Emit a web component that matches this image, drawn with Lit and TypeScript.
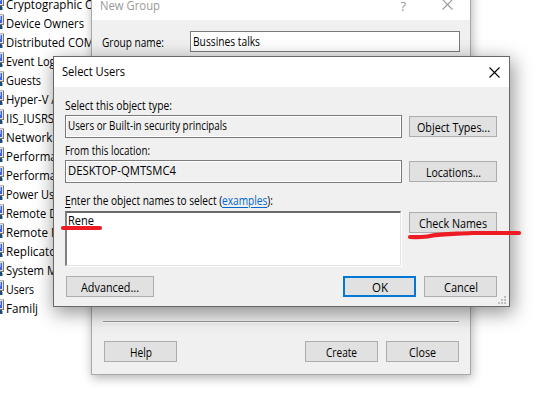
import { LitElement, html, css, svg } from "lit";
import { customElement, property } from "lit/decorators.js";

/* A run of text condensed or widened so that it fills a given width. */
@customElement("fit-text")
class FitText extends LitElement {
  @property({ type: Number }) w = 0;
  static styles = css`
    :host { display: inline-block; white-space: pre; flex: none; }
    span { display: inline-block; transform-origin: 0 0; }
  `;
  render() { return html`<span><slot></slot></span>`; }
  firstUpdated() {
    const s = this.renderRoot.querySelector("span") as HTMLElement;
    const natural = s.getBoundingClientRect().width;
    if (!this.w || !natural) return;
    this.style.width = this.w + "px";
    s.style.transform = `scaleX(${(this.w / natural).toFixed(4)})`;
  }
}

const groups: [string, number][] = [
  ["Cryptographic O", 88], ["Device Owners", 78], ["Distributed COM", 88],
  ["Event Log Readers", 94], ["Guests", 35], ["Hyper-V Administrators", 124], ["IIS_IUSRS", 48],
  ["Network Config", 84], ["Performance Log", 92], ["Performance Mon", 96],
  ["Power Users", 64], ["Remote Desktop", 86], ["Remote Manage", 88],
  ["Replicator", 55], ["System Managed", 90], ["Users", 28], ["Familj", 32],
];

const userIcon = svg`
  <path d="M0 0h4v11H0z" fill="#b9b8b4"/>
  <path d="M0 1h3v9H0z" fill="#e4e2dc"/>
  <path d="M0 2h2v7H0z" fill="#3c62dc"/>
  <path d="M0 2h1v4H0z" fill="#8caef5"/>
  <path d="M3 1h1v10H0v-1h3z" fill="#77776f"/>
  <path d="M0 11h2v4H0z" fill="#1f4a72"/><path d="M2 12h1v3H2z" fill="#8fb0c8"/>`;

@customElement("app-root")
class AppRoot extends LitElement {
  static styles = css`
    :host { display: block; position: relative; width: 553px; height: 418px; overflow: hidden;
      background: #fff; color: #000; font: 12px/16px "Open Sans", "Noto Sans", sans-serif; }
    * { box-sizing: border-box; }
    .list { display: flex; flex-direction: column; margin-top: -5px; width: 150px; }
    .row { display: flex; height: 19px; align-items: center; gap: 2px; white-space: nowrap; }
    .row svg { width: 4px; height: 16px; flex: none; align-self: flex-start; }
    .win { position: absolute; background: #f0f0f0; display: flex; flex-direction: column; }
    .back { left: 91px; top: -11px; width: 380px; height: 386px; border: 1px solid #a8a8a8;
      box-shadow: 1px 3px 10px rgba(0,0,0,.3); }
    .front { left: 53px; top: 56px; width: 457px; height: 251px; border: 1px solid #686868;
      box-shadow: 2px 5px 18px 1px rgba(0,0,0,.42); }
    .title { background: #fff; display: flex; height: 30px; flex: none; align-items: center;
      padding: 0 9px 0 8px; }
    .grow { flex: 1; }
    .back .title { color: #999; padding: 1px 17px 0 8px; }
    .q { font-size: 13px; margin-right: 36px; }
    .x { width: 11px; height: 11px; fill: none; stroke: currentColor; }
    .back .x { margin-top: -2px; }
    .field { border: 1px solid #7a7a7a; background: #fff; padding: 0 2px; }
    .name { display: flex; margin: 11px 10px 0 10px; height: 21px; align-items: center; }
    .name > fit-text { margin-top: 2px; }
    .name .field { height: 21px; width: 270px; line-height: 19px; margin-left: auto; }
    .sep { margin: auto 11px 0; height: 2px; border-top: 1px solid #999; background: #fff; flex: none; }
    .buttons { display: flex; gap: 8px; flex: none; }
    .back .buttons { margin: 18px 11px 12px 12px; }
    .btn { width: 73px; height: 21px; background: #e1e1e1; border: 1px solid #adadad; flex: none;
      display: flex; justify-content: center; align-items: center; line-height: 17px; padding-top: 1px; }
    .wide { width: 88px; }
    .ok { border: 2px solid #0078d7; }
    .body { display: grid; grid-template-columns: 337px 88px; column-gap: 7px; row-gap: 0;
      grid-template-rows: 28px 23px 22px 23px 28px 56px; padding-left: 11px; }
    .label { align-self: end; height: 17px; line-height: 16px; grid-column: 1 / 3; white-space: nowrap; }
    .label.low { height: 18px; }
    .ro { background: #f0f0f0; box-shadow: inset 0 0 0 1px #fff; line-height: 19px; height: 23px; }
    .body .btn { margin-top: 1px; }
    .area { border: 1px solid #e3e3e3; border-top: 2px solid #696969; border-left: 2px solid #808080;
      box-shadow: 1px 1px 0 #fff; width: 336px; height: 55px; padding: 0 1px; background: #fff; line-height: 16px; }
    .front .buttons { margin: 9px 12px 0; }
    u { text-underline-offset: 2px; }
    .link { color: #0066cc; text-decoration: underline; text-underline-offset: 2px; }
    .grip { position: absolute; right: 3px; bottom: 2px; width: 8px; height: 8px; fill: #bfbfbf; }
    .ink { position: absolute; left: 0; top: 0; width: 553px; height: 418px; fill: none;
      stroke: #ed1c24; stroke-width: 4.2; stroke-linecap: round; stroke-linejoin: round; }
  `;
  render() {
    const x = html`<svg class="x" viewBox="0 0 11 11"><path d="M.5 .5l10 10M10.5 .5l-10 10" stroke-width="1.1"/></svg>`;
    return html`
      <div class="list">${groups.map(([g, w]) => html`
        <div class="row"><svg viewBox="0 0 4 16">${userIcon}</svg><fit-text w=${w}>${g}</fit-text></div>`)}
      </div>
      <div class="win back">
        <div class="title"><fit-text w="60">New Group</fit-text><span class="grow"></span><span class="q">?</span>${x}</div>
        <div class="name"><fit-text w="62">Group name:</fit-text>
          <div class="field"><fit-text w="67">Bussines talks</fit-text></div></div>
        <div class="sep"></div>
        <div class="buttons"><div class="btn"><fit-text w="22">Help</fit-text></div><span class="grow"></span>
          <div class="btn"><fit-text w="31">Create</fit-text></div><div class="btn"><fit-text w="27">Close</fit-text></div></div>
      </div>
      <div class="win front">
        <div class="title"><fit-text w="63">Select Users</fit-text><span class="grow"></span>${x}</div>
        <div class="body">
          <div class="label"><fit-text w="107">Select this object type:</fit-text></div>
          <div class="field ro"><fit-text w="159">Users or Built-in security principals</fit-text></div>
          <div class="btn wide"><fit-text w="73">Object Types...</fit-text></div>
          <div class="label"><fit-text w="85">From this location:</fit-text></div>
          <div class="field ro"><fit-text w="108">DESKTOP-QMTSMC4</fit-text></div>
          <div class="btn wide"><fit-text w="55">Locations...</fit-text></div>
          <div class="label low"><fit-text w="208"><u>E</u>nter the object names to select (<span class="link">examples</span>):</fit-text></div>
          <div class="area"><fit-text w="26">Rene</fit-text></div>
          <div class="btn wide"><fit-text w="68">Check Names</fit-text></div>
        </div>
        <div class="buttons"><div class="btn wide"><fit-text w="58">Advanced...</fit-text></div><span class="grow"></span>
          <div class="btn ok"><fit-text w="16">OK</fit-text></div><div class="btn"><fit-text w="34">Cancel</fit-text></div></div>
        <svg class="grip" viewBox="0 0 8 8"><path d="M6 0h2v2H6zM3 3h2v2H3zM6 3h2v2H6zM0 6h2v2H0zM3 6h2v2H3zM6 6h2v2H6z"/></svg>
      </div>
      <svg class="ink" viewBox="0 0 553 418"><path d="M63 228H100"/><path d="M410 237C417 237 424 237.5 430 236C442 233.500 454 234 472 233H519"/></svg>`;
  }
}
